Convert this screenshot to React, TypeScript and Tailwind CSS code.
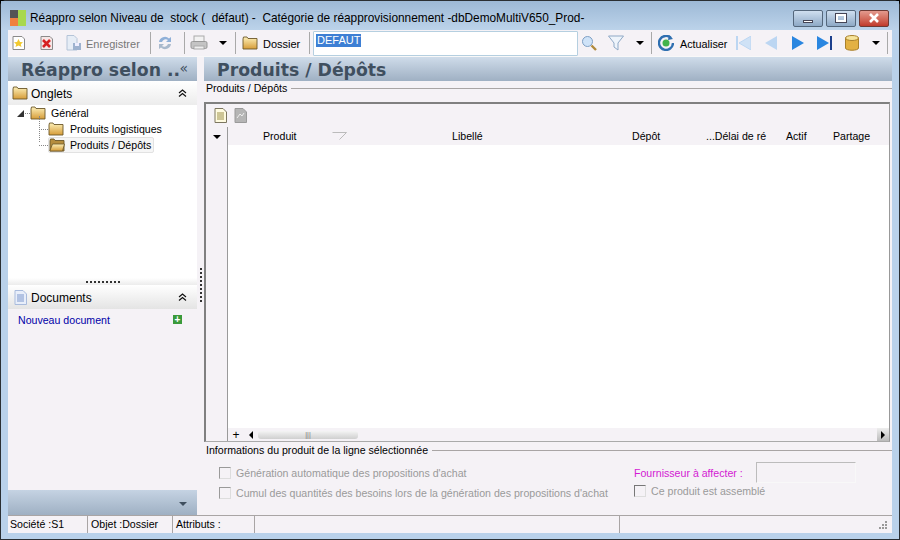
const FolderIcon = ({ open = false, className = '' }: { open?: boolean; className?: string }) => (
  <svg width="16" height="14" viewBox="0 0 16 14" className={className}>
    <defs>
      <linearGradient id="fold" x1="0" y1="0" x2="0" y2="1">
        <stop offset="0" stopColor="#fdf0b8" />
        <stop offset="1" stopColor="#d69c38" />
      </linearGradient>
    </defs>
    <path d="M1 3 L1 13 L15 13 L15 2.5 L6 2.5 L5 1 L1.5 1 Z" fill={open ? '#b58d3e' : 'url(#fold)'} stroke="#6b5728" strokeWidth="0.9" />
    {open && <path d="M0.8 13 L3.5 6 L15.5 6 L13.5 13 Z" fill="url(#fold)" stroke="#6b5728" strokeWidth="0.8" />}
  </svg>
);

const Caret = ({ className = '' }: { className?: string }) => (
  <svg width="8" height="4" viewBox="0 0 8 4" className={className}>
    <path d="M0 0 L8 0 L4 4 Z" fill="#000" />
  </svg>
);

const Sep = ({ className = '' }: { className?: string }) => <div className={`w-px h-[22px] bg-[#a9a9a9] ${className}`} />;

const DoubleUp = ({ className = '' }: { className?: string }) => (
  <svg width="9" height="8" viewBox="0 0 9 8" className={className}>
    <path d="M1 4 L4.5 1 L8 4 M1 7.5 L4.5 4.5 L8 7.5" fill="none" stroke="#111" strokeWidth="1.2" />
  </svg>
);

const Doc = ({ faded = false }: { faded?: boolean }) => (
  <svg width="13" height="15" viewBox="0 0 13 15">
    <path d="M1 0.5 H9 L12.5 4 V14.5 H1 Z" fill={faded ? '#b5b5b5' : '#fffbe0'} stroke={faded ? '#9a9a9a' : '#7c7660'} />
    {faded ? (
      <path d="M3 10 L6 6 L8 8 L10 5" stroke="#eee" fill="none" />
    ) : (
      <path d="M3 5 H10 M3 7 H10 M3 9 H10 M3 11 H10" stroke="#9c8f4a" />
    )}
  </svg>
);

const Checkbox = ({ dark = false }: { dark?: boolean }) => (
  <div
    className={`w-[12px] h-[12px] border border-r-[#ddd] border-b-[#ddd] bg-[#f5f2f6] shrink-0 ${
      dark ? 'border-t-[#777] border-l-[#777]' : 'border-t-[#9a9a9a] border-l-[#9a9a9a]'
    }`}
  />
);

export default function App() {
  return (
    <div className="w-[900px] h-[540px] bg-black overflow-hidden font-['Liberation_Sans',sans-serif] text-[10.6px] text-black">
      <div className="w-full h-full rounded-t-[6px] border border-[#2a2f33] bg-[#b9d1ea] flex flex-col">
        {/* title bar */}
        <div className="h-[29px] bg-gradient-to-b from-[#9db9d6] to-[#bcd3ea] flex items-center shrink-0 pl-[9px] pr-[10px]">
          <svg width="16" height="16" viewBox="0 0 16 16" className="mt-[4px]">
            <rect x="0" y="0" width="8" height="8" fill="#555" />
            <rect x="8" y="0" width="8" height="16" fill="#a8d84e" />
            <rect x="0" y="8" width="8" height="8" fill="#f08040" />
          </svg>
          <span className="ml-1 text-[11.85px] whitespace-pre mt-[6px]">Réappro selon Niveau de  stock (  défaut) -  Catégorie de réapprovisionnement -dbDemoMultiV650_Prod-</span>
          <div className="ml-auto flex gap-[3px] mt-[5px]">
            <div className="w-[30px] h-[17px] rounded-[2px] border border-[#54677c] bg-gradient-to-b from-[#cfdff0] to-[#8ea9c6] flex items-end justify-center pb-[3px]">
              <div className="w-[10px] h-[3px] bg-white border border-[#445]" />
            </div>
            <div className="w-[30px] h-[17px] rounded-[2px] border border-[#54677c] bg-gradient-to-b from-[#cfdff0] to-[#8ea9c6] flex items-center justify-center">
              <div className="w-[10px] h-[8px] bg-transparent border-2 border-white outline outline-1 outline-[#445]" />
            </div>
            <div className="w-[30px] h-[17px] rounded-[2px] border border-[#6e3a34] bg-gradient-to-b from-[#e39a8e] to-[#c0392b] flex items-center justify-center">
              <svg width="12" height="10" viewBox="0 0 12 10">
                <path d="M2 1 L10 9 M10 1 L2 9" stroke="#fff" strokeWidth="2.6" />
              </svg>
            </div>
          </div>
        </div>

        {/* client area */}
        <div className="flex-1 mx-[7px] flex flex-col bg-[#f5f2f6] min-h-0">
          {/* toolbar */}
          <div className="h-[27px] flex items-center shrink-0 border-b border-[#f8f8f8]">
            <div className="ml-1 w-[13px] h-[14px]">
              <svg width="13" height="14" viewBox="0 0 13 14">
                <path d="M1 0.5 H10 L12.5 3 V13.5 H1 Z" fill="#fff" stroke="#8a8a8a" />
                <path d="M6.5 3 L8 6 L11 6.3 L8.8 8.3 L9.5 11 L6.5 9.5 L3.5 11 L4.2 8.3 L2 6.3 L5 6 Z" fill="#f2c92e" />
              </svg>
            </div>
            <div className="ml-[15px] w-[13px] h-[14px]">
              <svg width="13" height="14" viewBox="0 0 13 14">
                <path d="M1 0.5 H10 L12.5 3 V13.5 H1 Z" fill="#f6e6e6" stroke="#8a8a8a" />
                <path d="M3 4 L10 11 M10 4 L3 11" stroke="#d62020" strokeWidth="2.6" />
              </svg>
            </div>
            <div className="ml-[13px] w-4 h-4">
              <svg width="16" height="16" viewBox="0 0 16 16">
                <path d="M1 0.5 H8 L11 3.5 V15 H1 Z" fill="#e6edf6" stroke="#b4c4d8" />
                <rect x="7" y="8" width="8" height="7" fill="#9db2cf" />
                <rect x="9" y="8" width="4" height="3" fill="#eef" />
              </svg>
            </div>
            <span className="ml-1 pt-[2px] text-[#777] w-[53px] text-[11px]">Enregistrer</span>
            <Sep className="ml-[11px]" />
            <svg width="16" height="16" viewBox="0 0 16 16" className="ml-[6px]">
              <path d="M2 7 A6 6 0 0 1 12 3.5 L14 2 L14 7 L9 7 L11 5 A4 4 0 0 0 5 7 Z" fill="#8fb0d8" />
              <path d="M14 9 A6 6 0 0 1 4 12.5 L2 14 L2 9 L7 9 L5 11 A4 4 0 0 0 11 9 Z" fill="#a9b9cc" />
            </svg>
            <Sep className="ml-[11px]" />
            <svg width="18" height="16" viewBox="0 0 18 16" className="ml-[5px]">
              <rect x="4" y="1" width="10" height="6" fill="#f2f2f2" stroke="#aaa" />
              <rect x="1" y="6.5" width="16" height="7" rx="1.5" fill="#c4c4c4" stroke="#999" />
              <rect x="4" y="11" width="10" height="3" fill="#eee" stroke="#aaa" />
            </svg>
            <Caret className="ml-[11px]" />
            <Sep className="ml-[8px]" />
            <FolderIcon className="ml-[6px]" />
            <span className="ml-[5px] pt-[2px] w-[36px] text-[11px]">Dossier</span>
            <Sep className="ml-[10px]" />
            <div className="ml-[3px] w-[265px] h-[25px] bg-white border border-[#b5cfe0] rounded-[1px] flex items-start pl-[2px] pt-[2px]">
              <span className="bg-[#3d7fd4] text-white leading-[13px] px-px text-[11px]">DEFAUT</span>
            </div>
            <svg width="16" height="16" viewBox="0 0 16 16" className="ml-[3px]">
              <circle cx="6.5" cy="6.5" r="5" fill="#cfe3f8" stroke="#7e9fc4" />
              <path d="M10.5 10.5 L15 15" stroke="#b08a3c" strokeWidth="2.4" />
            </svg>
            <svg width="16" height="16" viewBox="0 0 16 16" className="ml-[11px]">
              <path d="M0.5 1 H15.5 L10 8 V15 L6 12 V8 Z" fill="#eef4fb" stroke="#8fa9c6" />
            </svg>
            <Caret className="ml-[12px]" />
            <Sep className="ml-[7px]" />
            <svg width="16" height="16" viewBox="0 0 16 16" className="ml-[6px]">
              <path d="M13 3 A7 7 0 1 0 15 8" fill="none" stroke="#2f6fb0" strokeWidth="2.4" />
              <path d="M11 0 L15 4 L10 5 Z" fill="#2f6fb0" />
              <circle cx="8" cy="8" r="3.5" fill="#43b34a" />
            </svg>
            <span className="ml-[6px] pt-[2px] w-[47px] text-[10.8px]">Actualiser</span>
            <svg width="15" height="14" viewBox="0 0 15 14" className="ml-[9px]">
              <rect x="0" y="0" width="2" height="14" fill="#bcd6f2" />
              <path d="M15 0 L3 7 L15 14 Z" fill="#cfe2f6" stroke="#bcd6f2" />
            </svg>
            <svg width="12" height="14" viewBox="0 0 12 14" className="ml-[14px]">
              <path d="M12 0 L0 7 L12 14 Z" fill="#bcd6f2" />
            </svg>
            <svg width="12" height="14" viewBox="0 0 12 14" className="ml-[15px]">
              <path d="M0 0 L12 7 L0 14 Z" fill="#2a86e0" />
            </svg>
            <svg width="15" height="14" viewBox="0 0 15 14" className="ml-[13px]">
              <path d="M0 0 L12 7 L0 14 Z" fill="#2a86e0" />
              <rect x="13" y="0" width="2" height="14" fill="#1c3f8c" />
            </svg>
            <svg width="14" height="16" viewBox="0 0 14 16" className="ml-[13px]">
              <path d="M0.5 3 V13 C0.5 16 13.5 16 13.5 13 V3 Z" fill="#e3b143" stroke="#a9812d" />
              <ellipse cx="7" cy="3" rx="6.5" ry="2.5" fill="#f6e39a" stroke="#a9812d" />
            </svg>
            <Caret className="ml-[13px]" />
            <Sep className="ml-[7px]" />
          </div>

          {/* body */}
          <div className="flex-1 flex min-h-0">
            {/* sidebar */}
            <div className="w-[189px] flex flex-col shrink-0">
              <div className="h-6 pt-[3px] bg-gradient-to-b from-[#cfdcea] to-[#9fb0c3] flex items-center font-['DejaVu_Sans'] font-bold text-[17.3px] text-[#3f4f5f] shrink-0 relative">
                <span className="ml-[13px] whitespace-nowrap">Réappro selon ..</span>
                <span className="absolute right-[9px] top-[4px] font-normal text-[14px] leading-none">«</span>
              </div>
              <div className="h-6 bg-gradient-to-b from-white to-[#ececec] flex items-center shrink-0 pl-[4px] text-[12px]">
                <FolderIcon />
                <span className="ml-[3px] pt-[2px]">Onglets</span>
                <DoubleUp className="ml-auto mr-[10px]" />
              </div>
              <div className="h-[173px] bg-white shrink-0 relative">
                <div className="h-[16px] flex items-center">
                  <svg width="7" height="7" viewBox="0 0 7 7" className="ml-[9px]"><path d="M7 0 V7 H0 Z" fill="#333" /></svg>
                  <div className="ml-[1px] w-[5px] border-t border-dotted border-[#888]" />
                  <FolderIcon />
                  <span className="ml-[5px] pt-[2px]">Général</span>
                </div>
                <div className="h-[16px] flex items-center">
                  <div className="ml-[31px] w-[9px] border-t border-dotted border-[#888]" />
                  <FolderIcon />
                  <span className="ml-[6px] pt-[2px]">Produits logistiques</span>
                </div>
                <div className="h-[16px] flex items-center">
                  <div className="ml-[31px] w-[9px] border-t border-dotted border-[#888]" />
                  <div className="flex items-center h-[16px] border border-[#e2e2e2] rounded-[2px] bg-[#f6f6f6] pr-[2px]">
                    <FolderIcon open />
                    <span className="ml-[5px] pt-[2px]">Produits / Dépôts</span>
                  </div>
                </div>
                <div className="absolute left-[31px] top-[11px] h-[26px] border-l border-dotted border-[#888]" />
              </div>
              <div className="h-[7px] bg-gradient-to-b from-white to-[#ececec] flex justify-center items-center shrink-0">
                <div className="w-[34px] border-t-2 border-dotted border-[#333]" />
              </div>
              <div className="h-6 bg-gradient-to-b from-white to-[#e4e4e4] flex items-center shrink-0 pl-[6px] text-[12px]">
                <svg width="13" height="15" viewBox="0 0 13 15">
                  <path d="M1 0.5 H9 L12.5 4 V14.5 H1 Z" fill="#e8eefa" stroke="#a9bbdc" />
                  <path d="M3 5 H10 M3 7 H10 M3 9 H10 M3 11 H10" stroke="#7d97cc" />
                </svg>
                <span className="ml-[4px] pt-[2px]">Documents</span>
                <DoubleUp className="ml-auto mr-[10px]" />
              </div>
              <div className="flex-1 flex items-start pl-[10px] pt-[4px] text-[#0000a8]">
                <span className="flex-1">Nouveau document</span>
                <div className="w-[9px] h-[9px] bg-[#3a9a3a] mr-[15px] mt-[2px] flex items-center justify-center text-white font-bold text-[10px] leading-none">+</div>
              </div>
              <div className="h-[25px] bg-gradient-to-b from-[#c5d3e3] to-[#9fb0c3] flex items-end justify-end shrink-0 pb-[9px] pr-[10px]">
                <svg width="8" height="4" viewBox="0 0 8 4"><path d="M0 0 L8 0 L4 4 Z" fill="#3f4f5f" /></svg>
              </div>
            </div>

            {/* splitter */}
            <div className="w-[7px] shrink-0 flex justify-center items-start pt-[211px]">
              <div className="h-[34px] border-l-2 border-dotted border-[#333]" />
            </div>

            {/* main */}
            <div className="flex-1 flex flex-col min-w-0">
              <div className="h-6 pt-[3px] bg-gradient-to-b from-[#cfdcea] to-[#9fb0c3] flex items-center font-['DejaVu_Sans'] font-bold text-[17.3px] text-[#3f4f5f] shrink-0">
                <span className="ml-[13px]">Produits / Dépôts</span>
              </div>
              <div className="h-[14px] flex items-center shrink-0 pl-[2px]">
                <span className="pt-[2px]">Produits / Dépôts</span>
                <div className="flex-1 h-px bg-[#a9a5a5] ml-[4px] mr-0" />
              </div>
              <div className="h-[7px] shrink-0" />
              <div className="h-[340px] shrink-0 flex flex-col border-2 border-r border-b border-[#808080] border-r-[#999] border-b-[#aaa] mr-[2px]">
                <div className="h-[23px] flex items-center pl-[8px] gap-[7px] shrink-0">
                  <Doc />
                  <Doc faded />
                </div>
                <div className="flex-1 flex min-h-0">
                  <div className="w-[22px] shrink-0 flex justify-center pt-[8px] border-r border-[#9a9a9a]">
                    <Caret />
                  </div>
                  <div className="flex-1 flex flex-col bg-white min-w-0">
                    <div className="h-[18px] bg-[#f5f2f6] shrink-0 relative">
                      <div className="flex h-full items-center pl-[35px]">
                        <span className="w-[69px] pt-[2px]">Produit</span>
                        <svg width="15" height="8" viewBox="0 0 15 8"><path d="M0.5 0.5 H14.5 L7.5 7.5" fill="none" stroke="#bbb" /></svg>
                        <span className="ml-[105px] w-[180px] pt-[2px]">Libellé</span>
                        <span className="w-[74px] pt-[2px]">Dépôt</span>
                        <span className="w-[80px] pt-[2px] whitespace-nowrap">...Délai de ré</span>
                        <span className="w-[47px] pt-[2px]">Actif</span>
                        <span className="pt-[2px]">Partage</span>
                      </div>
                    </div>
                    <div className="flex-1" />
                    <div className="h-[13px] bg-[#f5f2f6] flex items-center shrink-0">
                      <span className="w-[16px] text-center text-[12px] leading-none">+</span>
                      <svg width="4" height="8" viewBox="0 0 4 8" className="ml-[5px]"><path d="M4 0 V8 L0 4 Z" fill="#000" /></svg>
                      <div className="ml-[5px] w-[100px] h-[8px] rounded-[3px] bg-gradient-to-b from-[#f4f4f4] to-[#cfcfcf] flex items-center justify-center text-[7px] leading-none text-[#777]">|||</div>
                      <div className="flex-1" />
                      <div className="w-[12px] h-[13px] bg-gradient-to-b from-[#eee] to-[#bbb] flex items-center justify-center">
                        <svg width="4" height="8" viewBox="0 0 4 8"><path d="M0 0 V8 L4 4 Z" fill="#000" /></svg>
                      </div>
                    </div>
                  </div>
                </div>
              </div>
              <div className="h-[14px] flex items-center shrink-0 mt-[1px] pl-[2px]">
                <span className="pt-[2px]">Informations du produit de la ligne sélectionnée</span>
                <div className="flex-1 h-px bg-[#a9a5a5] ml-[4px]" />
              </div>
              <div className="flex flex-1 text-[#9a9a9a] pl-[15px] pt-[5px]">
                <div className="w-[415px] flex flex-col gap-[8px] pt-[5px]">
                  <div className="flex items-center gap-[5px] h-[12px]">
                    <Checkbox />
                    <span className="pt-[2px]">Génération automatique des propositions d&apos;achat</span>
                  </div>
                  <div className="flex items-center gap-[5px] h-[12px]">
                    <Checkbox />
                    <span className="pt-[2px]">Cumul des quantités des besoins lors de la génération des propositions d&apos;achat</span>
                  </div>
                </div>
                <div className="flex flex-col">
                  <div className="flex items-center h-[21px]">
                    <span className="text-[#d31ad3] w-[122px] pt-[2px]">Fournisseur à affecter :</span>
                    <div className="w-[100px] h-[21px] border border-[#bcbcbc] border-r-[#f8f8f8] border-b-[#f8f8f8]" />
                  </div>
                  <div className="flex items-center gap-[5px] h-[14px] mt-[1px]">
                    <Checkbox dark />
                    <span className="pt-[2px]">Ce produit est assemblé</span>
                  </div>
                </div>
              </div>
            </div>
          </div>

          {/* status bar */}
          <div className="h-[18px] shrink-0 border-t border-[#a9a5a5] flex items-center">
            <div className="w-[80px] h-full border-r border-[#a9a5a5] pl-[2px] flex items-center">Société :S1</div>
            <div className="w-[85px] h-full border-r border-[#a9a5a5] pl-[3px] flex items-center">Objet :Dossier</div>
            <div className="w-[82px] h-full border-r border-[#a9a5a5] pl-[3px] flex items-center">Attributs :</div>
            <div className="w-[365px] h-full border-r border-[#a9a5a5]" />
            <div className="flex-1 h-full flex items-end justify-end pr-[4px] pb-[3px]">
              <svg width="10" height="10" viewBox="0 0 10 10">
                <path d="M7 1 h2 v2 h-2 Z M4 4 h2 v2 h-2 Z M7 4 h2 v2 h-2 Z M1 7 h2 v2 h-2 Z M4 7 h2 v2 h-2 Z M7 7 h2 v2 h-2 Z" fill="#999" />
              </svg>
            </div>
          </div>
        </div>
        <div className="h-[6px] shrink-0" />
      </div>
    </div>
  );
}
